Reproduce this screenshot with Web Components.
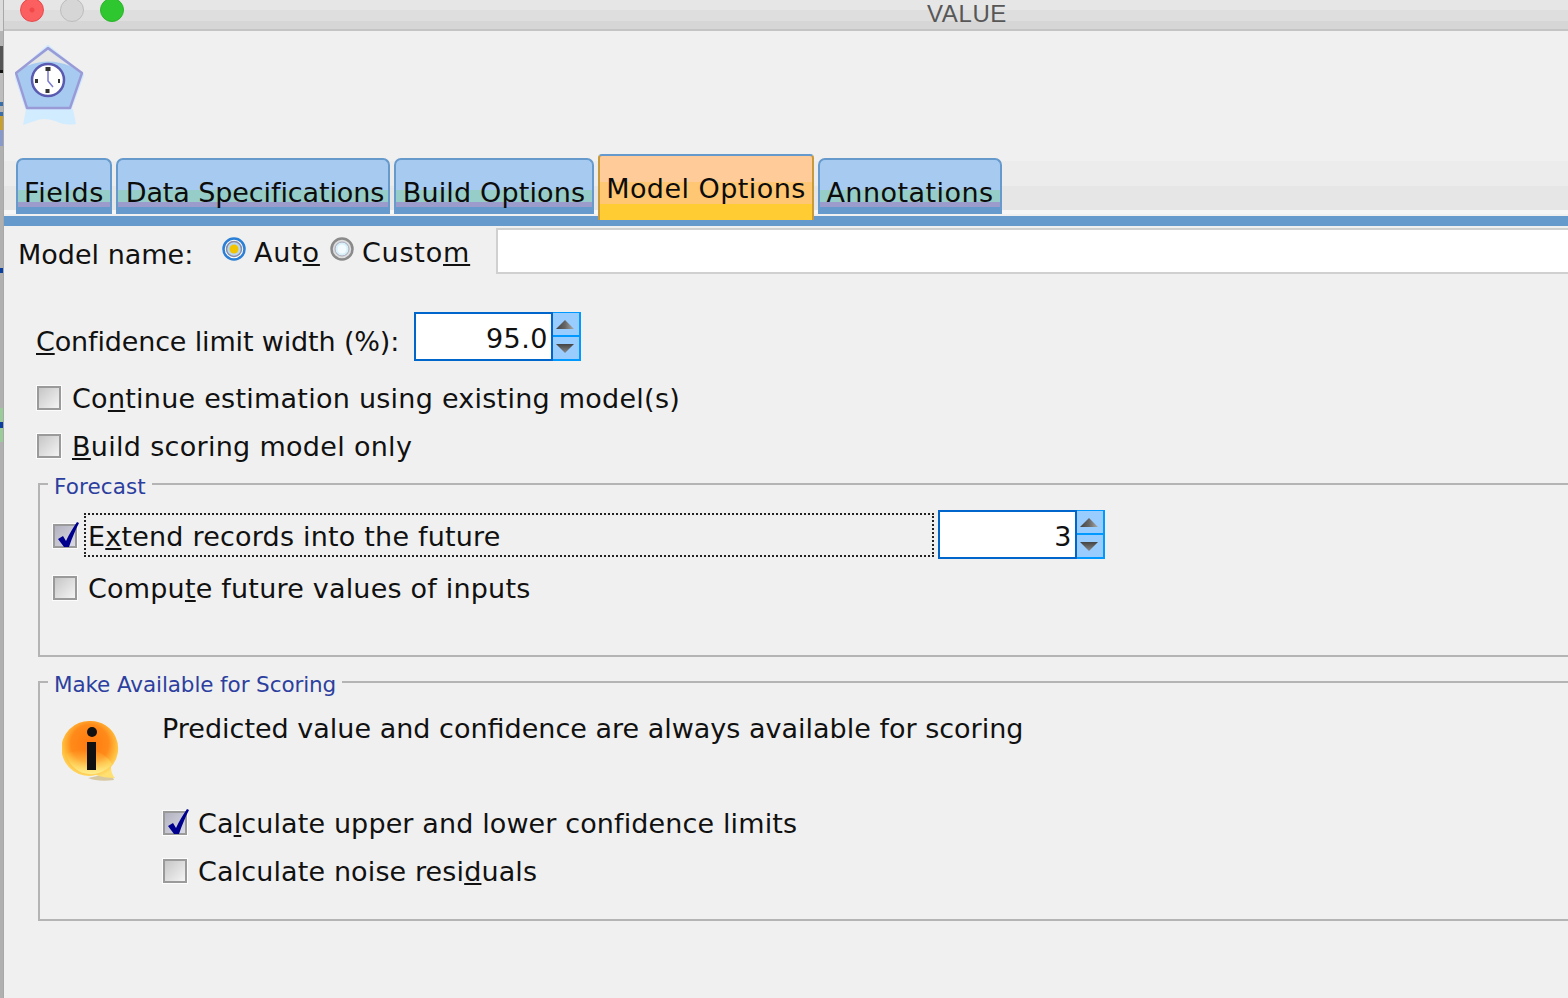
<!DOCTYPE html>
<html>
<head>
<meta charset="utf-8">
<title>VALUE</title>
<style>
  html, body { margin: 0; height: 100%; background: #f0f0f0; overflow: hidden; }
  body { font-family: "DejaVu Sans", "Liberation Sans", sans-serif; color: #111; }
  u { text-decoration-thickness: 2px; text-underline-offset: 2px; }
</style>
</head>
<body>
<model-window>
  <title-bar>VALUE</title-bar>
  <node-icon></node-icon>
  <tab-bar>
    <tab-item w="96" ls=".6">Fields</tab-item>
    <tab-item w="274" ls="-.1" indent="4">Data Specifications</tab-item>
    <tab-item w="200" ls=".15">Build Options</tab-item>
    <tab-item w="216" ls=".45" selected>Model Options</tab-item>
    <tab-item w="184" ls=".45">Annotations</tab-item>
  </tab-bar>
  <name-row></name-row>
  <confidence-row></confidence-row>
  <check-row pad="33" top="24" ls=".25"><span>Co<u>n</u>tinue estimation using existing model(s)</span></check-row>
  <check-row pad="33" top="22" ls=".3"><span><u>B</u>uild scoring model only</span></check-row>
  <group-box legend="Forecast" ls=".1" top="24" h="174">
    <forecast-row></forecast-row>
    <check-row pad="12" top="16" ls=".2"><span>Compu<u>t</u>e future values of inputs</span></check-row>
  </group-box>
  <group-box legend="Make Available for Scoring" ls="-.1" top="24" h="240">
    <scoring-panel></scoring-panel>
  </group-box>
</model-window>

<script>
class TitleBar extends HTMLElement {
  constructor() {
    super();
    this.attachShadow({ mode: "open" }).innerHTML = `
      <style>
        :host { display: block; height: 31px; box-sizing: border-box; border-bottom: 2px solid #c4c4c4;
          background: linear-gradient(#e6e6e6 0 10px, #dedede 10px 21px, #d6d6d6 21px); }
        .bar { display: flex; height: 100%; align-items: flex-start; }
        .lights { display: flex; gap: 16px; margin: -2px 0 0 17px; }
        .light { width: 24px; height: 24px; border-radius: 50%; box-sizing: border-box; }
        .red { background: radial-gradient(circle, #f04848 0 2px, #fb5f5f 3px); border: 1px solid #e8484c; }
        .grey { background: #d6d6d6; border: 1px solid #bdbdbd; }
        .green { background: #2fc72f; border: 1px solid #2cb52c; }
        .name { margin-left: 803px; font-family: "Liberation Sans", Arial, sans-serif; font-size: 24px; letter-spacing: .6px; color: #575757; }
      </style>
      <div class="bar">
        <div class="lights"><div class="light red"></div><div class="light grey"></div><div class="light green"></div></div>
        <div class="name"><slot></slot></div>
      </div>`;
  }
}
customElements.define("title-bar", TitleBar);

class NodeIcon extends HTMLElement {
  constructor() {
    super();
    this.attachShadow({ mode: "open" }).innerHTML = `
      <style>:host { display: block; height: 127px; padding: 14px 0 0 12px; box-sizing: border-box; } svg { display: block; }</style>
      <svg width="70" height="82" viewBox="0 0 70 82">
        <path d="M11 64 H58 L61 79 Q50 81 40 76 Q28 72 20 76 L8 80 Z" fill="#d2ecff"/>
        <path d="M33 2 L67 30 L55 63 H12 L1 30 Z" fill="#cfe8ff" stroke="#cfe8ff" stroke-width="4" stroke-linejoin="round"/>
        <path d="M33 3 L67 28 L55 63 H12 L1 28 Z" fill="#a6caf0" stroke="#9a9ad6" stroke-width="2.400" stroke-linejoin="round"/>
        <path d="M33 5 L55 21 Q33 12 12 21 Z" fill="#e6e6e6"/>
        <circle cx="33" cy="35" r="16" fill="#fff" stroke="#5a5ab0" stroke-width="2.500"/>
        <g fill="#333"><rect x="30.500" y="22" width="5" height="4"/><rect x="30.500" y="44" width="4" height="4"/><rect x="20" y="34" width="3" height="4"/><rect x="43" y="34" width="2" height="4"/></g>
        <path d="M33 26 V36 L38 42" fill="none" stroke="#7a7ad0" stroke-width="1.500"/>
      </svg>`;
  }
}
customElements.define("node-icon", NodeIcon);

class TabBar extends HTMLElement {
  constructor() {
    super();
    this.attachShadow({ mode: "open" }).innerHTML = `
      <style>
        :host { display: block; }
        .strip { display: flex; gap: 4px; height: 56px; padding-left: 13px;
          background: linear-gradient(#f0f0f0 0 3px, #ececec 3px 28px, #e6e6e6 28px 52px, #f6f6f6 52px); }
        .line { height: 10px; margin-top: 2px; background: #6699cc; }
      </style>
      <div class="strip"><slot></slot></div>
      <div class="line"></div>`;
  }
}
customElements.define("tab-bar", TabBar);

class TabItem extends HTMLElement {
  constructor() {
    super();
    this.attachShadow({ mode: "open" }).innerHTML = `
      <style>
        :host { display: block; box-sizing: border-box; height: 56px; border: 2px solid #6699cc; border-bottom: 0;
          border-radius: 7px 7px 0 0; white-space: nowrap; text-align: center; font-size: 27px;
          line-height: 66px; color: #0c0c0c;
          background: linear-gradient(#a6caf0 0 30px, #96cdc9 30px 42px, #9c9ccc 42px 47px, #6699cc 47px); }
        :host([selected]) { height: 66px; margin-top: -4px; position: relative; z-index: 1; border-radius: 4px 4px 0 0;
          border-color: #6699cc #c99a3a transparent;
          background: linear-gradient(#ffcc99 0 26px, #ffc773 26px 48px, #ffcc33 48px); }
      </style>
      <slot></slot>`;
  }
  connectedCallback() {
    this.style.width = this.getAttribute("w") + "px";
    this.style.letterSpacing = this.getAttribute("ls") + "px";
    if (this.hasAttribute("indent")) this.style.textIndent = this.getAttribute("indent") + "px";
  }
}
customElements.define("tab-item", TabItem);

class RadioButton extends HTMLElement {
  constructor() {
    super();
    this.attachShadow({ mode: "open" }).innerHTML = `
      <style>
        :host { display: inline-flex; align-items: center; gap: 8px; }
        svg { display: block; margin-top: -7px; }
      </style>
      <svg width="24" height="24" viewBox="0 0 24 24"></svg>
      <span><slot></slot></span>`;
  }
  connectedCallback() {
    const on = this.hasAttribute("checked");
    this.shadowRoot.querySelector("svg").innerHTML = on
      ? `<circle cx="12" cy="12" r="10.500" fill="#fff" stroke="#2a7fd6" stroke-width="2.500"/><circle cx="12" cy="12" r="7.500" fill="#b8d8f0" stroke="#8a8aaa" stroke-width="1.500"/><circle cx="12" cy="12" r="4.500" fill="#f2c400"/>`
      : `<circle cx="12" cy="12" r="10.500" fill="#ddd" stroke="#8a8a8a" stroke-width="2.500"/><circle cx="12" cy="12" r="7" fill="#d8f0fa" stroke="#aab" stroke-width="1"/><circle cx="12" cy="12" r="4.500" fill="#f4fbff"/>`;
  }
}
customElements.define("radio-button", RadioButton);

class NameRow extends HTMLElement {
  constructor() {
    super();
    this.attachShadow({ mode: "open" }).innerHTML = `
      <style>
        :host { display: flex; align-items: center; height: 46px; margin-top: 2px; font-size: 27px; }
        u { text-decoration-thickness: 2px; text-underline-offset: 2px; }
        .label { padding: 6px 0 0 15px; width: 204px; flex: none; white-space: nowrap; }
        .radios { display: flex; gap: 10px; width: 274px; flex: none; padding-top: 2px; letter-spacing: .8px; }
        .text { flex: 1; height: 46px; box-sizing: border-box; background: #fff; border: 2px solid #d0d0d0; border-right: 0; }
      </style>
      <div class="label">Model name:</div>
      <div class="radios">
        <radio-button checked>Aut<u>o</u></radio-button>
        <radio-button>Custo<u>m</u></radio-button>
      </div>
      <div class="text"></div>`;
  }
}
customElements.define("name-row", NameRow);

class SpinnerField extends HTMLElement {
  constructor() {
    super();
    this.attachShadow({ mode: "open" }).innerHTML = `
      <style>
        :host { display: flex; flex: none; height: 49px; letter-spacing: .5px; }
        .val { width: 139px; box-sizing: border-box; background: #fff; border: 2px solid #0066cc;
          text-align: right; padding-right: 3px; line-height: 49px; }
        .btns { width: 28px; display: flex; flex-direction: column; background: #99ccff;
          border-top: 1px solid #0099ff; border-bottom: 2px solid #0099ff; border-right: 2px solid #0099ff; box-sizing: border-box; }
        .btn { flex: 1; display: flex; align-items: center; justify-content: center; }
        .btn + .btn { border-top: 2px solid #0099ff; }
        svg { display: block; margin-right: 2px; }
      </style>
      <div class="val"><slot></slot></div>
      <div class="btns">
        <div class="btn"><svg width="20" height="11" viewBox="0 0 20 11"><defs><linearGradient id="up" x1="0" x2="1" y1="0" y2="0"><stop offset="0" stop-color="#444"/><stop offset=".5" stop-color="#666"/><stop offset="1" stop-color="#aaa"/></linearGradient></defs><path d="M10 1 L19 10 H1 Z" fill="url(#up)"/></svg></div>
        <div class="btn"><svg width="20" height="11" viewBox="0 0 20 11"><defs><linearGradient id="down" x1="0" x2="0" y1="0" y2="1"><stop offset="0" stop-color="#444"/><stop offset="1" stop-color="#888"/></linearGradient></defs><path d="M1 1 H19 L10 10 Z" fill="url(#down)"/></svg></div>
      </div>`;
  }
}
customElements.define("spinner-field", SpinnerField);

class ConfidenceRow extends HTMLElement {
  constructor() {
    super();
    this.attachShadow({ mode: "open" }).innerHTML = `
      <style>
        :host { display: flex; align-items: center; margin-top: 38px; padding-left: 33px; font-size: 27px; }
        u { text-decoration-thickness: 2px; text-underline-offset: 2px; }
        .label { width: 378px; flex: none; padding-top: 10px; white-space: nowrap; letter-spacing: -.15px; }
      </style>
      <div class="label"><u>C</u>onfidence limit width (%):</div>
      <spinner-field>95.0</spinner-field>`;
  }
}
customElements.define("confidence-row", ConfidenceRow);

class CheckMark extends HTMLElement {
  static get observedAttributes() { return ["checked"]; }
  constructor() {
    super();
    this.attachShadow({ mode: "open" }).innerHTML = `
      <style>
        :host { display: block; flex: none; width: 26px; height: 26px; }
        svg { display: block; overflow: visible; }
      </style>
      <svg width="26" height="26" viewBox="0 0 26 26"></svg>`;
    this.paint();
  }
  attributeChangedCallback() {
    this.paint();
  }
  paint() {
    const on = this.hasAttribute("checked");
    this.shadowRoot.querySelector("svg").innerHTML = `
      <defs><linearGradient id="box" x1="0" y1="0" x2="1" y2="1">
        <stop offset="0" stop-color="${on ? "#b0b0be" : "#c4c4c4"}"/><stop offset="1" stop-color="${on ? "#dcdce8" : "#f6f6f6"}"/>
      </linearGradient></defs>
      <rect width="26" height="26" fill="#fcfcfc"/>
      <rect x="2" y="2" width="22" height="22" fill="url(#box)" stroke="#9a9a9a" stroke-width="2"/>
      ${on ? `<path d="M6 16 L11 13 L14 18 C17 11 21 5 25 -1 L27 0 C23 8 20 15 17 24 L12 24 Z" fill="#00008f"/>` : ""}`;
  }
}
customElements.define("check-mark", CheckMark);

class CheckRow extends HTMLElement {
  constructor() {
    super();
    this.attachShadow({ mode: "open" }).innerHTML = `
      <style>
        :host { display: flex; align-items: center; gap: 10px; height: 26px; font-size: 27px; white-space: nowrap; }
        ::slotted(span) { display: block; margin-top: 1px; }
      </style>
      <check-mark></check-mark>
      <slot></slot>`;
  }
  connectedCallback() {
    this.style.paddingLeft = this.getAttribute("pad") + "px";
    this.style.marginTop = this.getAttribute("top") + "px";
    this.style.letterSpacing = this.getAttribute("ls") + "px";
    if (this.hasAttribute("checked")) this.shadowRoot.querySelector("check-mark").setAttribute("checked", "");
  }
}
customElements.define("check-row", CheckRow);

class GroupBox extends HTMLElement {
  constructor() {
    super();
    this.attachShadow({ mode: "open" }).innerHTML = `
      <style>
        :host { display: block; box-sizing: border-box; margin-left: 35px; border: 2px solid #b4b4b4; border-right: 0; position: relative; }
        .legend { position: absolute; top: -9px; left: 8px; padding: 0 6px; background: #f0f0f0;
          font-size: 21.500px; line-height: 22px; color: #2c3f9f; white-space: nowrap; }
      </style>
      <div class="legend"></div>
      <slot></slot>`;
  }
  connectedCallback() {
    const legend = this.shadowRoot.querySelector(".legend");
    legend.textContent = this.getAttribute("legend");
    legend.style.letterSpacing = this.getAttribute("ls") + "px";
    this.style.marginTop = this.getAttribute("top") + "px";
    this.style.height = this.getAttribute("h") + "px";
  }
}
customElements.define("group-box", GroupBox);

class ForecastRow extends HTMLElement {
  constructor() {
    super();
    this.attachShadow({ mode: "open" }).innerHTML = `
      <style>
        :host { display: flex; align-items: center; margin-top: 25px; padding-left: 12px; height: 49px; font-size: 27px; }
        u { text-decoration-thickness: 2px; text-underline-offset: 2px; }
        check-mark { margin-top: 2px; }
        .focus { width: 850px; height: 44px; box-sizing: border-box; margin: 0 4px 0 6px; border: 2px dotted #222;
          padding-left: 2px; line-height: 43px; white-space: nowrap; letter-spacing: .2px; }
      </style>
      <check-mark checked></check-mark>
      <div class="focus">E<u>x</u>tend records into the future</div>
      <spinner-field>3</spinner-field>`;
  }
}
customElements.define("forecast-row", ForecastRow);

class InfoIcon extends HTMLElement {
  constructor() {
    super();
    this.attachShadow({ mode: "open" }).innerHTML = `
      <style>:host { display: block; flex: none; width: 60px; height: 62px; } svg { display: block; }</style>
      <svg width="60" height="62" viewBox="0 0 60 62">
        <defs>
          <radialGradient id="ball" cx=".5" cy=".4" r=".6">
            <stop offset="0" stop-color="#ff7a10"/><stop offset=".55" stop-color="#ff8a1a"/><stop offset=".8" stop-color="#ffc040"/><stop offset="1" stop-color="#ffe070"/>
          </radialGradient>
          <linearGradient id="low" x1="0" x2="0" y1="0" y2="1"><stop offset="0" stop-color="#ffd24a" stop-opacity="0"/><stop offset="1" stop-color="#ffee90"/></linearGradient>
        </defs>
        <path d="M26 58 Q36 62 52 60 L49 53 Z" fill="#d8c8a0"/>
        <path d="M29 1 A27.500 27.500 0 0 1 49 47 Q49 54 53 58 Q42 58 34 55 A27.500 27.500 0 1 1 29 1 Z" fill="url(#ball)"/>
        <path d="M4 34 A26 26 0 0 0 50 44 Q36 22 4 34 Z" fill="url(#low)"/>
        <circle cx="30" cy="12" r="5" fill="#111"/>
        <path d="M25 22 H34 V50 H25 Z" fill="#111"/>
      </svg>`;
  }
}
customElements.define("info-icon", InfoIcon);

class ScoringPanel extends HTMLElement {
  constructor() {
    super();
    this.attachShadow({ mode: "open" }).innerHTML = `
      <style>
        :host { display: flex; padding: 37px 0 0 22px; font-size: 27px; white-space: nowrap; }
        u { text-decoration-thickness: 2px; text-underline-offset: 2px; }
        .main { margin-left: 40px; margin-top: -10px; }
        .note { height: 38px; line-height: 38px; margin-bottom: 62px; }
      </style>
      <info-icon></info-icon>
      <div class="main">
        <div class="note">Predicted value and confidence are always available for scoring</div>
        <check-row checked pad="0" top="0" ls=".12"><span>Ca<u>l</u>culate upper and lower confidence limits</span></check-row>
        <check-row pad="0" top="22" ls=".12"><span>Calculate noise resi<u>d</u>uals</span></check-row>
      </div>`;
  }
}
customElements.define("scoring-panel", ScoringPanel);

class ModelWindow extends HTMLElement {
  constructor() {
    super();
    this.attachShadow({ mode: "open" }).innerHTML = `
      <style>
        :host { display: flex; height: 998px; overflow: hidden; background: #f0f0f0; }
        .edge { flex: none; width: 3px; position: relative; z-index: 1; box-shadow: 1px 0 0 #a8a8a8;
          background: linear-gradient(#dcdcdc 0 31px, #b4b4b4 31px 46px, #555 46px 70px, #111 70px 73px, #bdbdbd 73px 102px,
            #3b6ea8 102px 106px, #b4b4b4 106px 112px, #3b6ea8 112px 116px, #c8a030 116px 130px, #8899cc 130px 146px,
            #b0b0b0 146px 268px, #0a3fa0 268px 273px, #b0b0b0 273px 408px, #9c9 408px 422px, #0a3fa0 422px 428px,
            #9c9 428px 442px, #b0b0b0 442px); }
        .body { flex: 1; min-width: 0; }
      </style>
      <div class="edge"></div>
      <div class="body"><slot></slot></div>`;
  }
}
customElements.define("model-window", ModelWindow);
</script>
</body>
</html>
